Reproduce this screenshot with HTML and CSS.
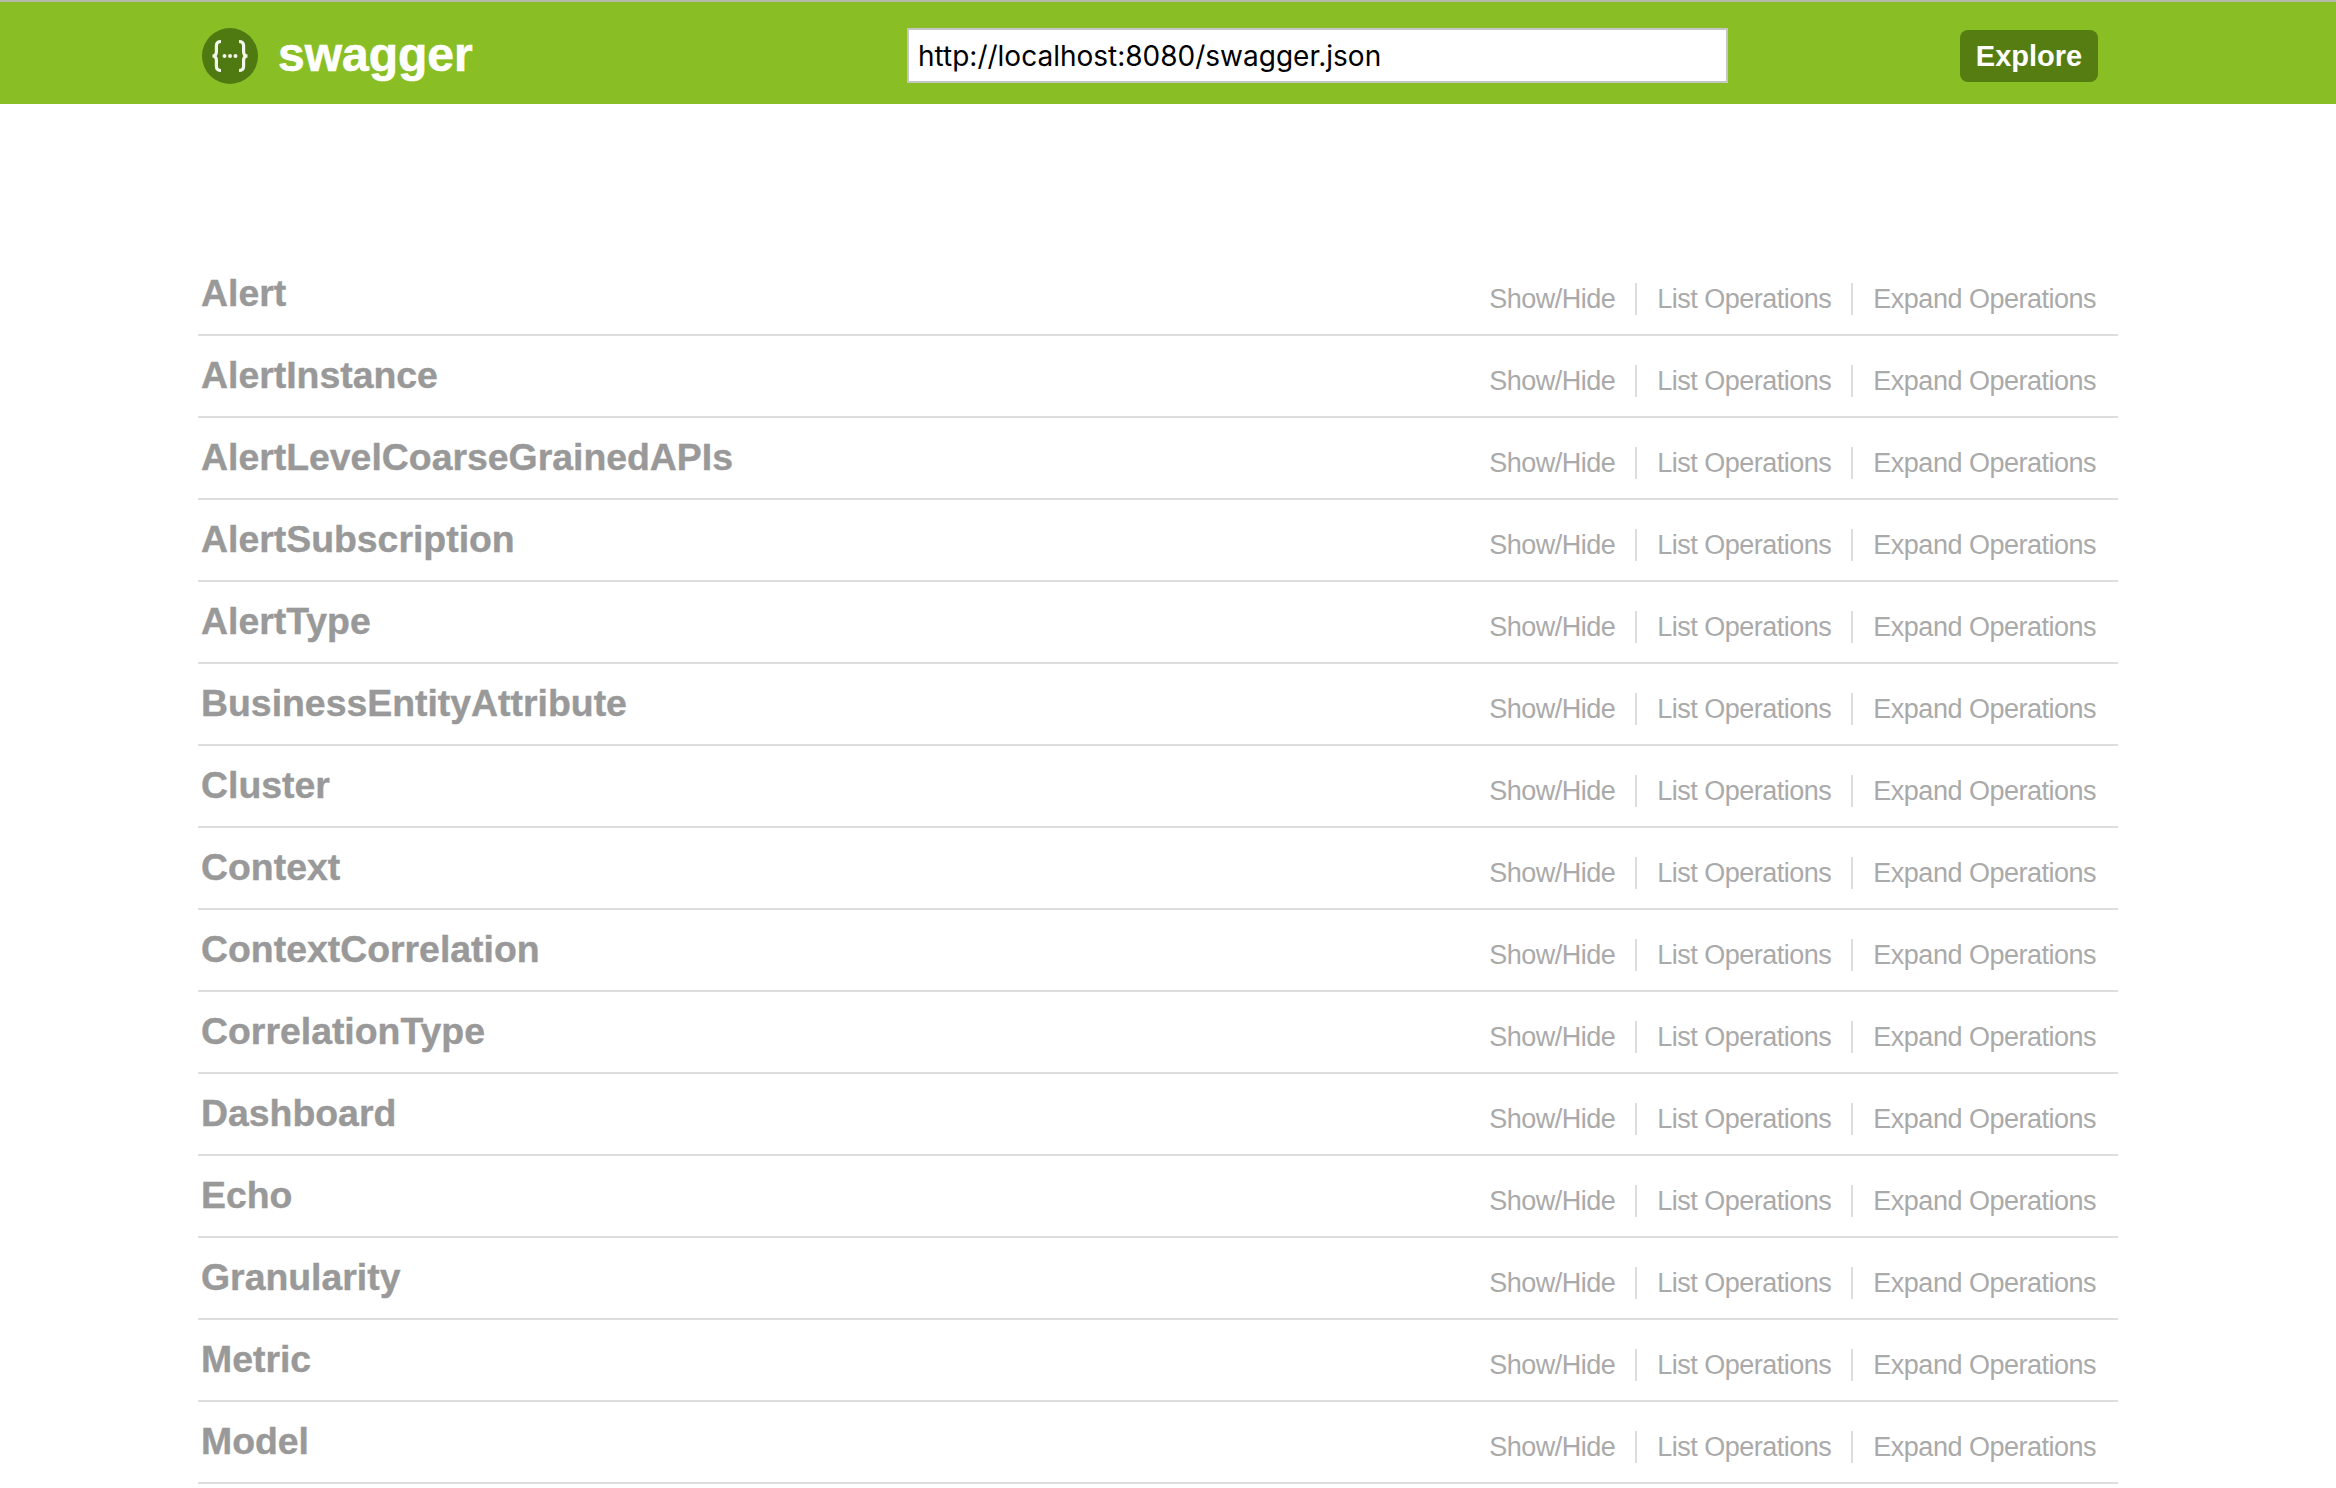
FILE: index.html
```html
<!DOCTYPE html>
<html lang="en">
    <head>
        <meta charset="utf-8" />
        <title>Swagger UI</title>
        <link rel="stylesheet" href="styles.css">
    </head>
    <body>
        <header class="topbar">
            <a class="logo" href="#">
                <svg class="logo-icon" viewBox="0 0 56 56" width="56" height="56">
                    <circle cx="28" cy="28" r="28" fill="#4f7a12" />
                    <path d="M19 13.500c-3.500 0-4.600 1.400-4.600 4.200v6c0 2.800-1.400 4.300-3.900 4.300 2.500 0 3.900 1.500 3.900 4.300v6c0 2.800 1.100 4.200 4.600 4.200M37 13.500c3.500 0 4.600 1.400 4.600 4.200v6c0 2.800 1.400 4.300 3.900 4.300-2.500 0-3.900 1.500-3.900 4.300v6c0 2.800-1.100 4.200-4.600 4.200" fill="none" stroke="#f3f6ea" stroke-width="3.200" />
                    <circle cx="22.500" cy="28" r="2" fill="#f3f6ea" />
                    <circle cx="28" cy="28" r="2" fill="#f3f6ea" />
                    <circle cx="33.500" cy="28" r="2" fill="#f3f6ea" />
                </svg>
                <span class="logo-text">swagger</span>
            </a>
            <input class="url-input" type="text" value="http://localhost:8080/swagger.json" />
            <a class="explore" href="#">Explore</a>
        </header>

        <ul class="resources">
            <li class="resource"><h2>Alert</h2><div class="options"><a href="#">Show/Hide</a><a href="#">List Operations</a><a href="#">Expand Operations</a></div></li>
            <li class="resource"><h2>AlertInstance</h2><div class="options"><a href="#">Show/Hide</a><a href="#">List Operations</a><a href="#">Expand Operations</a></div></li>
            <li class="resource"><h2>AlertLevelCoarseGrainedAPIs</h2><div class="options"><a href="#">Show/Hide</a><a href="#">List Operations</a><a href="#">Expand Operations</a></div></li>
            <li class="resource"><h2>AlertSubscription</h2><div class="options"><a href="#">Show/Hide</a><a href="#">List Operations</a><a href="#">Expand Operations</a></div></li>
            <li class="resource"><h2>AlertType</h2><div class="options"><a href="#">Show/Hide</a><a href="#">List Operations</a><a href="#">Expand Operations</a></div></li>
            <li class="resource"><h2>BusinessEntityAttribute</h2><div class="options"><a href="#">Show/Hide</a><a href="#">List Operations</a><a href="#">Expand Operations</a></div></li>
            <li class="resource"><h2>Cluster</h2><div class="options"><a href="#">Show/Hide</a><a href="#">List Operations</a><a href="#">Expand Operations</a></div></li>
            <li class="resource"><h2>Context</h2><div class="options"><a href="#">Show/Hide</a><a href="#">List Operations</a><a href="#">Expand Operations</a></div></li>
            <li class="resource"><h2>ContextCorrelation</h2><div class="options"><a href="#">Show/Hide</a><a href="#">List Operations</a><a href="#">Expand Operations</a></div></li>
            <li class="resource"><h2>CorrelationType</h2><div class="options"><a href="#">Show/Hide</a><a href="#">List Operations</a><a href="#">Expand Operations</a></div></li>
            <li class="resource"><h2>Dashboard</h2><div class="options"><a href="#">Show/Hide</a><a href="#">List Operations</a><a href="#">Expand Operations</a></div></li>
            <li class="resource"><h2>Echo</h2><div class="options"><a href="#">Show/Hide</a><a href="#">List Operations</a><a href="#">Expand Operations</a></div></li>
            <li class="resource"><h2>Granularity</h2><div class="options"><a href="#">Show/Hide</a><a href="#">List Operations</a><a href="#">Expand Operations</a></div></li>
            <li class="resource"><h2>Metric</h2><div class="options"><a href="#">Show/Hide</a><a href="#">List Operations</a><a href="#">Expand Operations</a></div></li>
            <li class="resource"><h2>Model</h2><div class="options"><a href="#">Show/Hide</a><a href="#">List Operations</a><a href="#">Expand Operations</a></div></li>
        </ul>
    </body>
</html>
```

FILE: styles.css
```css
html, body {
    height: 100%;
    overflow: hidden;
}
body {
    background-color: #fff;
    font-family: "Liberation Sans", Arial, sans-serif;
    margin: 0;
}
.topbar {
    align-items: center;
    background-color: #89bf25;
    border-top: 2px solid #b4b9ab;
    box-sizing: border-box;
    display: flex;
    height: 104px;
    padding: 5px 238px 0 202px;
}
.logo {
    align-items: center;
    color: #fff;
    display: flex;
    text-decoration: none;
    width: 705px;
}
.logo-icon {
    flex: none;
    margin-right: 20px;
}
.logo-text {
    -webkit-text-stroke: 0.6px #fff;
    font-size: 48px;
    font-weight: bold;
    margin-top: -2px;
}
.url-input {
    background-color: #fff;
    border: 2px solid #c6c6c6;
    box-sizing: border-box;
    color: #000;
    font-family: Inter, sans-serif;
    font-size: 28px;
    height: 55px;
    margin: 0;
    outline: none;
    padding: 0 9px;
    width: 821px;
}
.explore {
    background-color: #557d12;
    border-radius: 8px;
    color: #fff;
    font-size: 29px;
    font-weight: bold;
    height: 52px;
    line-height: 52px;
    margin-left: auto;
    text-align: center;
    text-decoration: none;
    width: 138px;
}
.resources {
    list-style: none;
    margin: 150px 0 0 198px;
    padding: 0;
    width: 1920px;
}
.resource {
    align-items: center;
    border-bottom: 2px solid #ddd;
    box-sizing: border-box;
    display: flex;
    height: 82px;
    justify-content: space-between;
    padding: 0 22px 0 3px;
}
.resource h2 {
    -webkit-text-stroke: 0.4px #999;
    color: #999;
    font-size: 37.4px;
    margin: 0 0 2px;
}
.options {
    display: flex;
    margin-top: 10px;
}
.options a {
    border-left: 2px solid #ddd;
    color: #aaa;
    font-size: 27px;
    letter-spacing: -0.5px;
    line-height: 32px;
    padding: 0 0 0 20px;
    margin-left: 20px;
    text-decoration: none;
}
.options a:first-child {
    border-left: 0;
    margin-left: 0;
    padding-left: 0;
}
```
